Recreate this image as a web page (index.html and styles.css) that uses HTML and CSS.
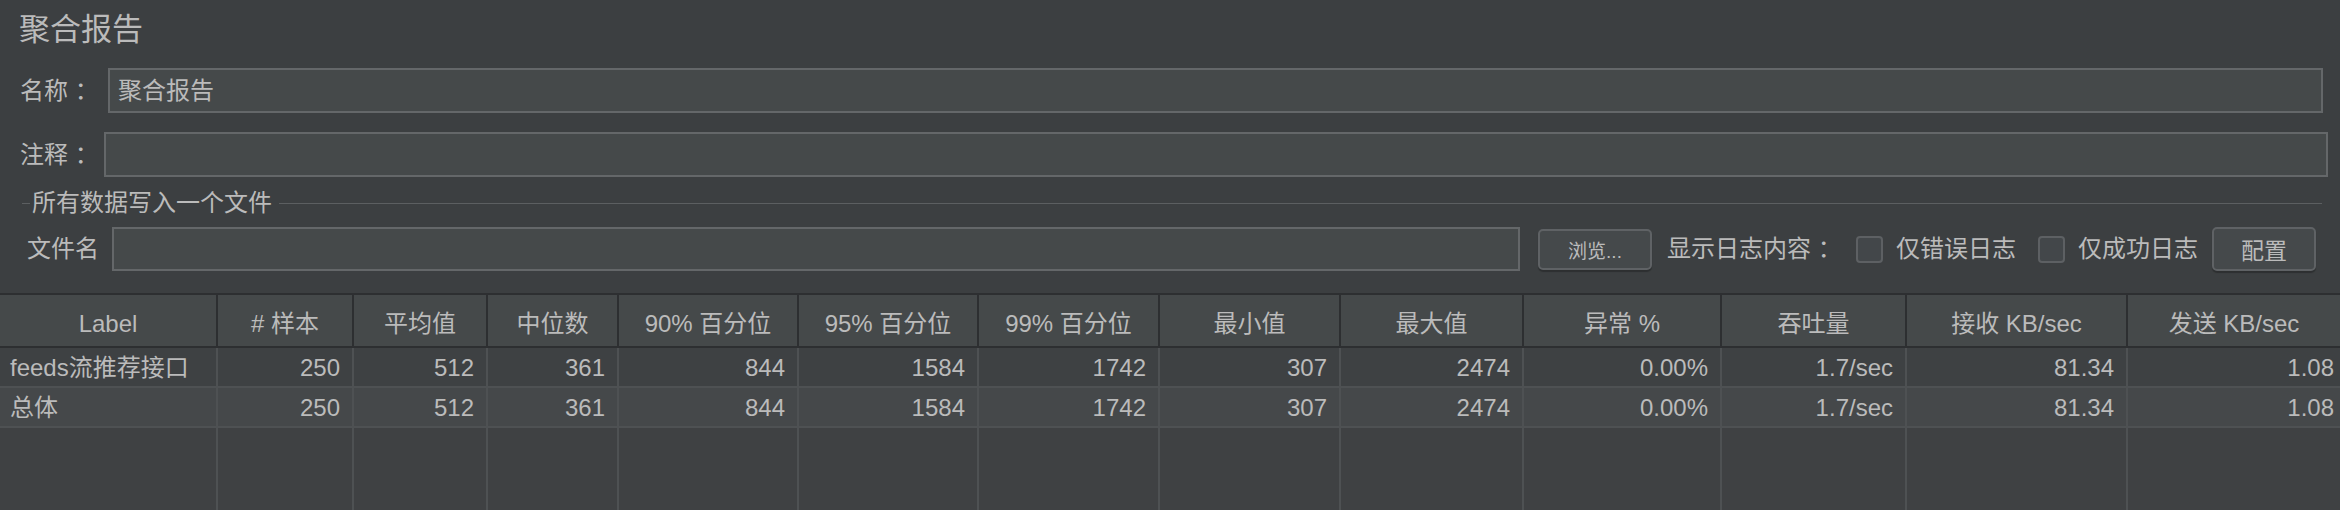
FILE: index.html
```html
<!DOCTYPE html>
<html lang="zh">
<head>
<meta charset="utf-8">
<title>聚合报告</title>
<link rel="stylesheet" href="styles.css">
</head>
<body>
<div class="panel">
  <div class="title">聚合报告</div>

  <div class="row row-name">
    <span class="lbl lbl-name">名称 ：</span>
    <div class="input">聚合报告</div>
  </div>

  <div class="row row-comment">
    <span class="lbl lbl-comment">注释 ：</span>
    <div class="input"></div>
  </div>

  <div class="group">
    <div class="legend">
      <span class="legend-stub"></span>
      <span class="legend-text">所有数据写入一个文件</span>
      <span class="legend-line"></span>
    </div>
    <div class="file-row">
      <span class="lbl lbl-file">文件名</span>
      <div class="input file-input"></div>
      <button class="btn btn-browse">浏览...</button>
      <span class="txt txt-show">显示日志内容 ：</span>
      <span class="checkbox"></span>
      <span class="txt txt-err">仅错误日志</span>
      <span class="checkbox"></span>
      <span class="txt txt-ok">仅成功日志</span>
      <button class="btn btn-config">配置</button>
    </div>
  </div>

  <div class="table">
    <div class="thead grid">
      <div class="th">Label</div>
      <div class="th"># 样本</div>
      <div class="th">平均值</div>
      <div class="th">中位数</div>
      <div class="th">90% 百分位</div>
      <div class="th">95% 百分位</div>
      <div class="th">99% 百分位</div>
      <div class="th">最小值</div>
      <div class="th">最大值</div>
      <div class="th">异常 %</div>
      <div class="th">吞吐量</div>
      <div class="th">接收 KB/sec</div>
      <div class="th">发送 KB/sec</div>
    </div>
    <div class="tr grid row-odd">
      <div class="td td-label">feeds流推荐接口</div>
      <div class="td">250</div>
      <div class="td">512</div>
      <div class="td">361</div>
      <div class="td">844</div>
      <div class="td">1584</div>
      <div class="td">1742</div>
      <div class="td">307</div>
      <div class="td">2474</div>
      <div class="td">0.00%</div>
      <div class="td">1.7/sec</div>
      <div class="td">81.34</div>
      <div class="td td-last">1.08</div>
    </div>
    <div class="tr grid row-even">
      <div class="td td-label">总体</div>
      <div class="td">250</div>
      <div class="td">512</div>
      <div class="td">361</div>
      <div class="td">844</div>
      <div class="td">1584</div>
      <div class="td">1742</div>
      <div class="td">307</div>
      <div class="td">2474</div>
      <div class="td">0.00%</div>
      <div class="td">1.7/sec</div>
      <div class="td">81.34</div>
      <div class="td td-last">1.08</div>
    </div>
    <div class="filler grid">
      <div class="fc"></div><div class="fc"></div><div class="fc"></div><div class="fc"></div>
      <div class="fc"></div><div class="fc"></div><div class="fc"></div><div class="fc"></div>
      <div class="fc"></div><div class="fc"></div><div class="fc"></div><div class="fc"></div>
      <div class="fc"></div>
    </div>
  </div>
</div>
</body>
</html>
```

FILE: styles.css
```css
* { box-sizing: border-box; }

html, body {
  margin: 0;
  padding: 0;
  background: #3c3f41;
  overflow: hidden;
}

body {
  width: 2340px;
  height: 510px;
  font-family: "Liberation Sans", "Noto Sans CJK SC", sans-serif;
  font-size: 24px;
  color: #bbbbbb;
}

.panel {
  display: flex;
  flex-direction: column;
  height: 510px;
}

.title {
  height: 60px;
  line-height: 60px;
  padding-left: 19px;
  font-size: 31px;
}

.row {
  display: flex;
  align-items: center;
  height: 45px;
  padding-left: 20px;
}

.row-name { margin-top: 8px; padding-right: 17px; }
.row-comment { margin-top: 19px; padding-right: 12px; }

.lbl { white-space: nowrap; line-height: 28px; }
.lbl-name { width: 88px; }
.lbl-comment { width: 84px; }

.input {
  flex: 1;
  height: 100%;
  background: #45494a;
  border: 2px solid #646769;
  padding-left: 8px;
  line-height: 41px;
  white-space: nowrap;
}

.group {
  display: flex;
  flex-direction: column;
}

.legend {
  display: flex;
  align-items: center;
  height: 24px;
  margin-top: 14px;
  margin-left: 22px;
  margin-right: 18px;
}

.legend-stub {
  width: 8px;
  height: 1px;
  background: #5c5f61;
  margin-right: 2px;
}

.legend-text {
  line-height: 24px;
  white-space: nowrap;
}

.legend-line {
  flex: 1;
  height: 1px;
  background: #5c5f61;
  margin-left: 7px;
}

.file-row {
  display: flex;
  align-items: center;
  height: 44px;
  margin-top: 12px;
  padding-left: 27px;
}

.lbl-file { width: 85px; }

.file-input {
  flex: 0 0 1408px;
}

.btn {
  font-family: "Liberation Sans", "Noto Sans CJK SC", sans-serif;
  color: #bbbbbb;
  background: #45494b;
  border: 2px solid #5f6265;
  border-radius: 5px;
  box-shadow: 0 2px 1px rgba(0, 0, 0, 0.25);
  padding: 0;
  cursor: default;
}

.btn-browse {
  width: 114px;
  height: 41px;
  margin-left: 18px;
  font-size: 19px;
}

.txt { white-space: nowrap; line-height: 28px; }

.txt-show { margin-left: 15px; width: 168px; }
.txt-err { margin-left: 13px; width: 120px; }
.txt-ok { margin-left: 13px; width: 120px; }

.checkbox {
  width: 27px;
  height: 27px;
  border: 2px solid #5d6063;
  border-radius: 4px;
  background: #43474a;
  margin-left: 21px;
}

.txt-err + .checkbox { margin-left: 22px; }

.btn-config {
  width: 104px;
  height: 44px;
  margin-left: 14px;
  font-size: 23px;
}

.table {
  margin-top: 22px;
  flex: 1;
  min-height: 0;
  display: flex;
  flex-direction: column;
}

.grid {
  display: grid;
  grid-template-columns: 216px 136px 134px 131px 180px 180px 181px 181px 183px 198px 185px 221px 214px;
}

.thead {
  border-top: 2px solid #2d2f31;
  border-bottom: 2px solid #2d2f31;
  background: #45494a;
}

.th {
  height: 51px;
  padding-top: 7px;
  line-height: 44px;
  text-align: center;
  white-space: nowrap;
  border-left: 2px solid #2d2f31;
}

.th:first-child { border-left: none; }

.tr {
  border-bottom: 2px solid #4e5153;
}

.row-odd { background: #3e4143; }
.row-even { background: #45484a; }

.td {
  height: 38px;
  padding-top: 3px;
  line-height: 34px;
  text-align: right;
  padding-right: 12px;
  white-space: nowrap;
  border-left: 2px solid #4e5153;
}

.td-label {
  text-align: left;
  padding-left: 10px;
  padding-right: 0;
  border-left: none;
}

.td-last { padding-right: 6px; }

.filler {
  flex: 1;
  min-height: 0;
  background: #3f4143;
}

.fc {
  border-left: 2px solid #4e5153;
}

.fc:first-child { border-left: none; }
```
